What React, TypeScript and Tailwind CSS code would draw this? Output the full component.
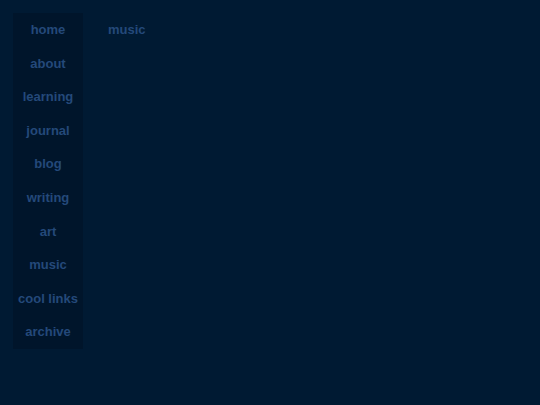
const links = ['home', 'about', 'learning', 'journal', 'blog', 'writing', 'art', 'music', 'cool links', 'archive'];

export default function App() {
  return (
    <div className="min-h-[405px] bg-[#001a33] p-[13px] flex gap-[25px] font-['Liberation_Sans',Arial,sans-serif] font-bold text-[13px] text-[#24497a]">
      <nav className="w-[70px] bg-[#00152b] flex flex-col self-start">
        {links.map((l) => (
          <a key={l} className="h-[33.6px] flex items-center justify-center whitespace-nowrap">
            {l}
          </a>
        ))}
      </nav>
      <main className="flex-1">
        <h1 className="h-[33.6px] flex items-center text-[13px]">music</h1>
      </main>
    </div>
  );
}
